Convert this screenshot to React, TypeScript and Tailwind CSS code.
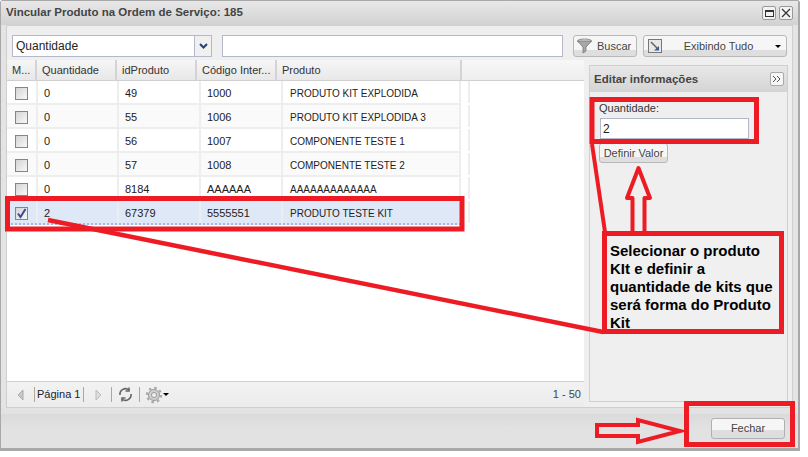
const rows = [
  { q: '0', id: '49', cod: '1000', nome: 'PRODUTO KIT EXPLODIDA' },
  { q: '0', id: '55', cod: '1006', nome: 'PRODUTO KIT EXPLODIDA 3' },
  { q: '0', id: '56', cod: '1007', nome: 'COMPONENTE TESTE 1' },
  { q: '0', id: '57', cod: '1008', nome: 'COMPONENTE TESTE 2' },
  { q: '0', id: '8184', cod: 'AAAAAA', nome: 'AAAAAAAAAAAAA' },
  { q: '2', id: '67379', cod: '5555551', nome: 'PRODUTO TESTE KIT', selected: true },
];

function Check({ on }: { on?: boolean }) {
  return (
    <div className="w-[13px] h-[13px] border border-[#858585] bg-gradient-to-br from-[#d4d4d4] to-[#f8f8f8] flex items-center justify-center">
      {on && (
        <svg width="11" height="11" viewBox="0 0 11 11">
          <path d="M2 5.5 L4.5 9 L9.5 1" fill="none" stroke="#3a4a9a" strokeWidth="2" />
        </svg>
      )}
    </div>
  );
}

function Head({ w, label }: { w: string; label: string }) {
  return (
    <div className={`${w} h-full shrink-0 border-r-2 border-[#d4d4d4] pl-[5px] flex items-center bg-gradient-to-b from-[#f6f6f6] to-[#e8e8e8] overflow-hidden whitespace-nowrap`}>
      {label}
    </div>
  );
}

function Gear() {
  return (
    <svg width="18" height="18" viewBox="0 0 18 18">
      <circle cx="9" cy="9" r="5.5" fill="#d0d0d0" stroke="#999" strokeWidth="1" />
      <circle cx="9" cy="9" r="7" fill="none" stroke="#aaa" strokeWidth="2.4" strokeDasharray="2.5 3" />
      <circle cx="9" cy="9" r="2.5" fill="#f2f2f2" stroke="#999" strokeWidth="1" />
    </svg>
  );
}

export default function App() {
  return (
    <div className="relative w-[808px] h-[457px] bg-white overflow-hidden text-[11px] text-[#222] font-['Liberation_Sans',Arial,sans-serif]">
      <div className="w-[800px] h-[451px] flex flex-col border border-[#a8a8a8] border-b-[3px] border-r-[2px] rounded-t-[3px] bg-[#e4e4e4]">
        {/* barra de titulo */}
        <div className="h-[24px] shrink-0 flex items-center justify-between px-[5px] bg-gradient-to-b from-[#e8e8e8] to-[#d2d2d2]">
          <span className="font-bold text-[11.5px] text-[#444]">Vincular Produto na Ordem de Serviço: 185</span>
          <div className="flex gap-[3px]">
            <div className="w-[14px] h-[14px] border border-[#999] rounded-[2px] bg-[#f2f2f2] flex items-center justify-center">
              <div className="w-[9px] h-[7px] border border-[#333] border-t-2" />
            </div>
            <div className="w-[14px] h-[14px] border border-[#999] rounded-[2px] bg-[#f2f2f2] flex items-center justify-center">
              <svg width="10" height="10" viewBox="0 0 10 10">
                <path d="M1 1 L9 9 M9 1 L1 9" stroke="#333" strokeWidth="1.2" />
              </svg>
            </div>
          </div>
        </div>

        <div className="flex-1 min-h-0 mx-[5px] border border-[#cfcfcf] bg-[#efefef] flex flex-col">
          {/* filtros */}
          <div className="h-[34px] shrink-0 flex items-center px-[5px] pt-[6px]">
            <div className="w-[200px] h-[22px] border border-[#b4b8cc] bg-white flex items-center text-[12px]">
              <span className="flex-1 pl-[3px]">Quantidade</span>
              <div className="w-[17px] h-full border-l border-[#b4b8cc] bg-[#f0f0f0] flex items-center justify-center">
                <svg width="9" height="6" viewBox="0 0 9 6">
                  <path d="M1 1 L4.5 4.5 L8 1" fill="none" stroke="#24407a" strokeWidth="2" />
                </svg>
              </div>
            </div>
            <div className="ml-[10px] w-[341px] h-[22px] border border-[#b4b8cc] bg-white" />
            <div className="ml-[10px] w-[64px] h-[22px] border border-[#b8b8b8] rounded-[3px] bg-gradient-to-b from-[#f6f6f6] from-70% to-[#dedede] to-70% flex items-center gap-[5px] pl-[3px] text-[#444]">
              <svg width="15" height="16" viewBox="0 0 15 16">
                <ellipse cx="7.5" cy="3" rx="7" ry="2" fill="#e4e4e4" stroke="#888" />
                <path d="M0.5 3 L6 9 V15 L9 13 V9 L14.5 3 Z" fill="#a8a8a8" stroke="#777" strokeWidth="0.8" />
              </svg>
              Buscar
            </div>
            <div className="ml-[6px] w-[144px] h-[22px] border border-[#b8b8b8] rounded-[3px] bg-gradient-to-b from-[#f6f6f6] from-70% to-[#dedede] to-70% flex items-center pl-[4px] pr-[5px] text-[#444]">
              <svg width="14" height="14" viewBox="0 0 14 14">
                <rect x="0.5" y="0.5" width="13" height="13" fill="#e8e8e8" stroke="#777" />
                <path d="M3 3 L10 10" stroke="#666" strokeWidth="1.5" />
                <path d="M6 11.5 L11 11.5 L11 7 Z" fill="#3a5a9a" />
              </svg>
              <span className="flex-1 text-center">Exibindo Tudo</span>
              <div className="w-0 h-0 border-x-[3px] border-x-transparent border-t-[3px] border-t-black" />
            </div>
          </div>

          <div className="flex-1 min-h-0 flex">
            {/* grade */}
            <div className="w-[577px] shrink-0 flex flex-col">
              <div className="h-[21px] shrink-0 flex text-[11px] text-[#333] border-b border-[#d0d0d0]">
                <Head w="w-[30px]" label="M..." />
                <Head w="w-[80px]" label="Quantidade" />
                <Head w="w-[80px]" label="idProduto" />
                <Head w="w-[80px]" label="Código Inter..." />
                <Head w="w-[185px]" label="Produto" />
                <div className="flex-1 bg-gradient-to-b from-[#f8f8f8] to-[#eeeeee]" />
              </div>
              <div className="flex-1 min-h-0 bg-white">
                {rows.map((r, i) => (
                  <div key={r.id} className="h-[24px] flex">
                    <div
                      className={`w-[454px] h-full flex items-center border-b-2 ${
                        r.selected
                          ? 'bg-[#dfe8f6] border-dotted border-[#a3bae9]'
                          : 'border-[#eeeeee] ' + (i % 2 ? 'bg-[#fafafa]' : 'bg-white')
                      }`}
                    >
                      <div className="w-[31px] h-full flex items-center justify-center pt-[3px] border-r-2 border-[#eeeeee]">
                        <Check on={r.selected} />
                      </div>
                      <div className="w-[81px] h-full flex items-center pl-[6px] pt-[2px] border-r-2 border-[#eeeeee]">{r.q}</div>
                      <div className="w-[82px] h-full flex items-center pl-[6px] pt-[2px] border-r-2 border-[#eeeeee]">{r.id}</div>
                      <div className="w-[82px] h-full flex items-center pl-[6px] pt-[2px] border-r-2 border-[#eeeeee]">{r.cod}</div>
                      <div className="flex-1 h-full flex items-center pl-[7px] pt-[2px] text-[10px] border-r-2 border-[#eeeeee]">{r.nome}</div>
                    </div>
                    <div className="w-[9px] h-[22px] border-r-2 border-[#eeeeee]" />
                  </div>
                ))}
              </div>
              <div className="h-[26px] shrink-0 border-t border-[#d0d0d0] flex items-center pl-[10px] pr-[3px] text-[#333] bg-gradient-to-b from-[#f2f2f2] to-[#ececec]">
                <svg width="7" height="12" viewBox="0 0 7 12"><path d="M6 1 V11 L1 6 Z" fill="#c8c8c8" stroke="#aaa" /></svg>
                <div className="ml-[10px] h-[15px] border-l border-[#b0a890]" />
                <span className="ml-[2px] text-[#223]">Página 1</span>
                <div className="ml-[3px] h-[15px] border-l border-[#b0a890]" />
                <svg className="ml-[11px]" width="7" height="12" viewBox="0 0 7 12"><path d="M1 1 V11 L6 6 Z" fill="#dcdcdc" stroke="#bbb" /></svg>
                <div className="ml-[9px] h-[15px] border-l border-[#b0a890]" />
                <svg className="ml-[6px]" width="15" height="15" viewBox="0 0 15 15" fill="none" stroke="#666" strokeWidth="1.6">
                  <path d="M2 8 A5.5 5.5 0 0 1 11 3 M13 7 A5.5 5.5 0 0 1 4 12" />
                  <path d="M11 0.5 V4 H7.5 M4 14.5 V11 H7.5" />
                </svg>
                <div className="ml-[6px] h-[15px] border-l border-[#b0a890]" />
                <div className="ml-[5px]"><Gear /></div>
                <div className="w-0 h-0 border-x-[3px] border-x-transparent border-t-[3px] border-t-black" />
                <span className="ml-auto text-[#444]">1 - 50</span>
              </div>
            </div>

            {/* painel lateral */}
            <div className="ml-[5px] mt-[5px] mb-[5px] w-[199px] shrink-0 border border-[#cfcfcf] bg-[#efefef]">
              <div className="h-[26px] flex items-center justify-between pl-[4px] pr-[3px] bg-gradient-to-b from-[#e8e8e8] to-[#d4d4d4]">
                <span className="font-bold text-[11.5px] text-[#444] pt-px">Editar informações</span>
                <div className="w-[14px] h-[14px] border border-[#aaa] rounded-[2px] bg-[#f6f6f6] flex items-center justify-center">
                  <svg width="10" height="8" viewBox="0 0 10 8" fill="none" stroke="#555">
                    <path d="M1 1 L4 4 L1 7 M5 1 L8 4 L5 7" />
                  </svg>
                </div>
              </div>
              <div className="pl-[9px] pt-[9px]">
                <div className="text-[11px] text-[#333] h-[14px] leading-[14px]">Quantidade:</div>
                <div className="mt-[3px] ml-px w-[149px] h-[21px] border border-[#b4b8cc] bg-white text-[12px] pl-[2px] leading-[20px]">2</div>
                <div className="mt-[4px] w-[69px] h-[20px] border border-[#b8b8b8] rounded-[3px] bg-gradient-to-b from-[#f6f6f6] from-70% to-[#dedede] to-70% flex items-center justify-center text-[#444]">
                  Definir Valor
                </div>
              </div>
            </div>
          </div>
        </div>

        {/* rodape */}
        <div className="h-[40px] shrink-0 flex items-center justify-end pr-[13px] bg-gradient-to-b from-[#e2e2e2] from-15% via-[#dadada] via-16% to-[#e2e2e2] to-50%">
          <div className="w-[74px] h-[21px] border border-[#b0b0b0] rounded-[3px] bg-gradient-to-b from-[#f6f6f6] from-60% to-[#dedede] to-60% flex items-center justify-center text-[#444]">
            Fechar
          </div>
        </div>
      </div>

      {/* anotacoes em vermelho por cima da tela */}
      <svg className="absolute inset-0 pointer-events-none" width="808" height="457" viewBox="0 0 808 457" fill="none" stroke="#ed1c24">
        <rect x="7.5" y="198.5" width="454.5" height="30.5" strokeWidth="5" />
        <rect x="592" y="99.5" width="164.5" height="42" strokeWidth="5" />
        <rect x="686.5" y="403.5" width="106" height="41" strokeWidth="5" />
        <path d="M48 220 L603 332" strokeWidth="4.5" />
        <path d="M592 144 L605 232" strokeWidth="4" />
        <path d="M632.5 232 V198 H627 L638.5 168 L650 198 H644.5 V232" strokeWidth="4" strokeLinejoin="round" />
        <path d="M597 425 H638 V420 L680 431 L638 442 V436 H597 Z" strokeWidth="4" />
      </svg>
      <div className="absolute left-[602px] top-[231px] w-[182px] h-[103px] border-[5px] border-[#ed1c24] bg-[#f0f0f0] pl-[3px] pt-[6px] text-[15px] leading-[18px] font-bold text-black">
        Selecionar o produto KIt e definir a quantidade de kits que será forma do Produto Kit
      </div>
    </div>
  );
}
